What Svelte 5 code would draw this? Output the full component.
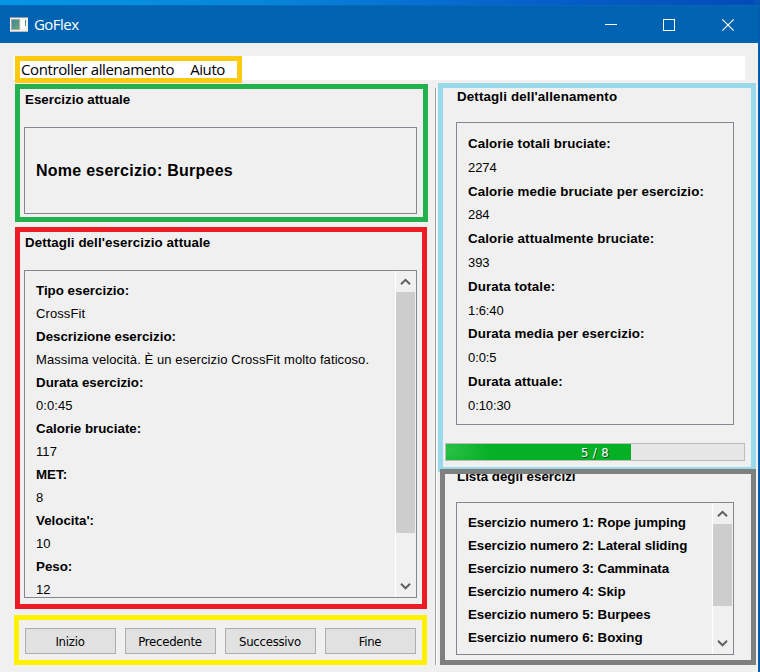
<script>
  const details = [
    ['Tipo esercizio:', 'CrossFit'],
    ['Descrizione esercizio:', 'Massima velocità. È un esercizio CrossFit molto faticoso.'],
    ['Durata esercizio:', '0:0:45'],
    ['Calorie bruciate:', '117'],
    ['MET:', '8'],
    ["Velocita':", '10'],
    ['Peso:', '12']
  ];
  const totals = [
    ['Calorie totali bruciate:', '2274'],
    ['Calorie medie bruciate per esercizio:', '284'],
    ['Calorie attualmente bruciate:', '393'],
    ['Durata totale:', '1:6:40'],
    ['Durata media per esercizio:', '0:0:5'],
    ['Durata attuale:', '0:10:30']
  ];
  const exercises = ['Rope jumping', 'Lateral sliding', 'Camminata', 'Skip', 'Burpees', 'Boxing'];
  const current = 5;
  const total = 8;
</script>

{#snippet scrollbar(size)}
  <div class="scrollbar">
    <svg class="up" width="19" height="21" viewBox="0 0 19 21"><path d="M5 13.3 9.5 8.8 14 13.3" /></svg>
    <div class="thumb" style="height:{size}px"></div>
    <svg class="down" width="19" height="22" viewBox="0 0 19 22"><path d="M5 8.8 9.5 13.3 14 8.8" /></svg>
  </div>
{/snippet}

<div class="desktop">
  <div class="window">
    <header>
      <svg class="appicon" width="18" height="16" viewBox="0 0 18 16">
        <defs>
          <linearGradient id="screen" x1="0" y1="0" x2="1" y2="1">
            <stop offset="0" stop-color="#4a7fa0" /><stop offset="1" stop-color="#5fae6c" />
          </linearGradient>
        </defs>
        <rect width="18" height="15" fill="#f1f1f1" />
        <path d="M0 .5H18" stroke="#999" />
        <path d="M0 14.5H18" stroke="#bdbdbd" />
        <rect x="1.5" y="2.5" width="8" height="10" fill="url(#screen)" stroke="#aaa" />
        <rect x="11" y="3" width="4" height="9" fill="#fff" />
        <rect x="15" y="3" width="1" height="6" fill="#58976f" />
      </svg>
      <span class="title">GoFlex</span>
      <svg class="controls" width="130" height="14" viewBox="0 0 130 14">
        <path d="M0 6.5H12M58.5 1.5H69.5V12.5H58.5Z" shape-rendering="crispEdges" />
        <path d="M117.3 1.3 128.7 12.7M128.7 1.3 117.3 12.7" stroke-width="1.2" />
      </svg>
    </header>

    <nav>
      <div class="menuframe"><span>Controller allenamento</span><span class="help">Aiuto</span></div>
    </nav>

    <main>
      <section class="left">
        <div class="frame green">
          <h2>Esercizio attuale</h2>
          <div class="box name">Nome esercizio: Burpees</div>
        </div>
        <div class="frame red">
          <h2>Dettagli dell'esercizio attuale</h2>
          <div class="box info">
            <div class="rows">
              {#each details as [label, value]}
                <b>{label}</b>
                <span>{value}</span>
              {/each}
            </div>
            {@render scrollbar(241)}
          </div>
        </div>
        <div class="frame yellow">
          <button>Inizio</button><button>Precedente</button><button>Successivo</button><button>Fine</button>
        </div>
      </section>

      <div class="divider"></div>

      <section class="right">
        <div class="frame blue">
          <h2>Dettagli dell'allenamento</h2>
          <div class="box totals">
            {#each totals as [label, value]}
              <b>{label}</b>
              <span>{value}</span>
            {/each}
          </div>
          <div class="progress">
            <div class="fill" style="width:{Math.floor((current / total) * 297)}px"></div>
            <span>{current} / {total}</span>
          </div>
        </div>
        <div class="frame gray">
          <h2>Lista degli esercizi</h2>
          <div class="box list">
            <div class="rows">
              {#each exercises as name, i}
                <b>Esercizio numero {i + 1}: {name}</b>
              {/each}
            </div>
            {@render scrollbar(82)}
          </div>
        </div>
      </section>
    </main>
  </div>
</div>

<style>
  :global(body) { margin: 0; }
  * { box-sizing: border-box; }
  .desktop {
    width: 760px;
    height: 672px;
    padding-top: 5px;
    overflow: hidden;
    background: linear-gradient(90deg, #0795e6 0, #0785da 35%, #0660cc 70%, #034bb8 99%, #0858ad);
    font: 13.33px/23px "Liberation Sans", Arial, sans-serif;
    color: #000;
  }
  .window {
    width: 759px;
    height: 667px;
    background: #f0f0f0;
    border-right: 1px solid #0063b1;
  }
  header {
    display: flex;
    align-items: center;
    width: 759px;
    height: 38px;
    padding-left: 10px;
    background: #0063b1;
    color: #fff;
    border-top: 1px solid #0869b4;
  }
  .appicon { margin-top: 1px; }
  .title {
    flex: 1;
    padding: 0 0 1px 6px;
    font: 15px "Open Sans", "Noto Sans", sans-serif;
    letter-spacing: -.55px;
  }
  .controls {
    margin-right: 24px;
    fill: none;
    stroke: #fff;
  }
  nav {
    width: 732px;
    height: 24px;
    margin: 13px 0 3px 13px;
    background: #fff;
  }
  .menuframe {
    display: flex;
    width: 227px;
    height: 27px;
    margin-left: 2px;
    position: relative;
    border: 5px solid #ffc90e;
    background: #fff;
    padding-left: 1px;
    font: 15px/17px "Open Sans", "Noto Sans", sans-serif;
    letter-spacing: -.4px;
    white-space: nowrap;
  }
  .help { margin-left: 16px; }
  main { display: flex; }
  .left { width: 414px; margin-left: 14px; }
  .frame { border: 5px solid; overflow: hidden; }
  h2 {
    margin: 0;
    font-size: 13.33px;
    line-height: 16px;
    white-space: nowrap;
  }
  .box { border: 1px solid #828790; overflow: hidden; }
  b, .rows span, .totals span { display: block; white-space: nowrap; }
  .rows span, .totals span { font-size: 13px; letter-spacing: .09px; }
  .totals span { letter-spacing: -.1px; }
  .green {
    height: 138px;
    margin: 1px 0 5px 1px;
    padding: 3px 6px 0 4px;
    border-color: #22b14c;
  }
  .green h2 { padding-left: 1px; }
  .name {
    height: 87px;
    margin-top: 19px;
    padding-left: 11px;
    font-weight: bold;
    font-size: 16px;
    line-height: 85px;
    letter-spacing: .25px;
  }
  .red {
    width: 412px;
    height: 382px;
    margin: 0 0 6px 1px;
    padding: 3px 5px 0 4px;
    border-color: #ed1c24;
  }
  .red h2 { padding-left: 1px; letter-spacing: .09px; }
  .info {
    display: flex;
    height: 328px;
    margin-top: 19px;
  }
  .rows { flex: 1; padding: 8px 0 0 11px; }
  .scrollbar {
    display: flex;
    flex-direction: column;
    width: 21px;
    border-left: 1px solid #fff;
    padding-right: 1px;
  }
  .scrollbar svg {
    display: block;
    fill: none;
    stroke: #606060;
    stroke-width: 2;
    flex: none;
  }
  .thumb { flex: none; width: 19px; background: #cdcdcd; }
  .scrollbar .down { margin-top: auto; }
  .yellow {
    display: flex;
    gap: 9px;
    width: 413px;
    height: 50px;
    padding: 8px 6px;
    border-color: #fff200;
  }
  button {
    width: 91px;
    height: 26px;
    padding: 0 1px 0 0;
    border: 1px solid #adadad;
    background: #e1e1e1;
    color: #000;
    font: 13px "DejaVu Sans Condensed", "DejaVu Sans", sans-serif;
    letter-spacing: -.25px;
  }
  .divider {
    width: 3px;
    height: 577px;
    margin: 5px 0 0 7px;
    border-left: 1px solid #a0a0a0;
    box-shadow: inset 1px 0 #fff;
  }
  .right { width: 318px; }
  .blue {
    height: 389px;
    padding: 1px 0 0 13px;
    border-color: #99d9ea;
  }
  .blue h2, .gray h2 { padding-left: 1px; }
  .blue h2 { letter-spacing: .15px; }
  .totals {
    width: 278px;
    height: 303px;
    margin-top: 17px;
    padding: 9px 0 0 11px;
    line-height: 23.8px;
  }
  .totals b { letter-spacing: .09px; }
  .progress {
    display: grid;
    position: relative;
    left: -11px;
    width: 300px;
    height: 18px;
    margin-top: 18px;
    border: 1px solid #bcbcbc;
    background: #e6e6e6;
  }
  .fill {
    grid-area: 1 / 1;
    height: 16px;
    background: radial-gradient(ellipse 45px 26px at 0 6px, #2cc148, #06b025);
  }
  .progress span {
    grid-area: 1 / 1;
    z-index: 1;
    text-align: center;
    font: 13px/17px "DejaVu Sans Condensed", "DejaVu Sans", sans-serif;
    letter-spacing: .35px;
    color: #fff;
    text-shadow: 1px 1px #174d20;
  }
  .gray {
    position: relative;
    width: 316px;
    height: 196px;
    margin: -3px 0 0 2px;
    padding-left: 11px;
    border-color: #7f7f7f;
  }
  .gray h2 { margin-top: -5px; }
  .list {
    display: flex;
    width: 278px;
    height: 153px;
    margin-top: 17px;
  }
  .list b { letter-spacing: -.04px; }
</style>
